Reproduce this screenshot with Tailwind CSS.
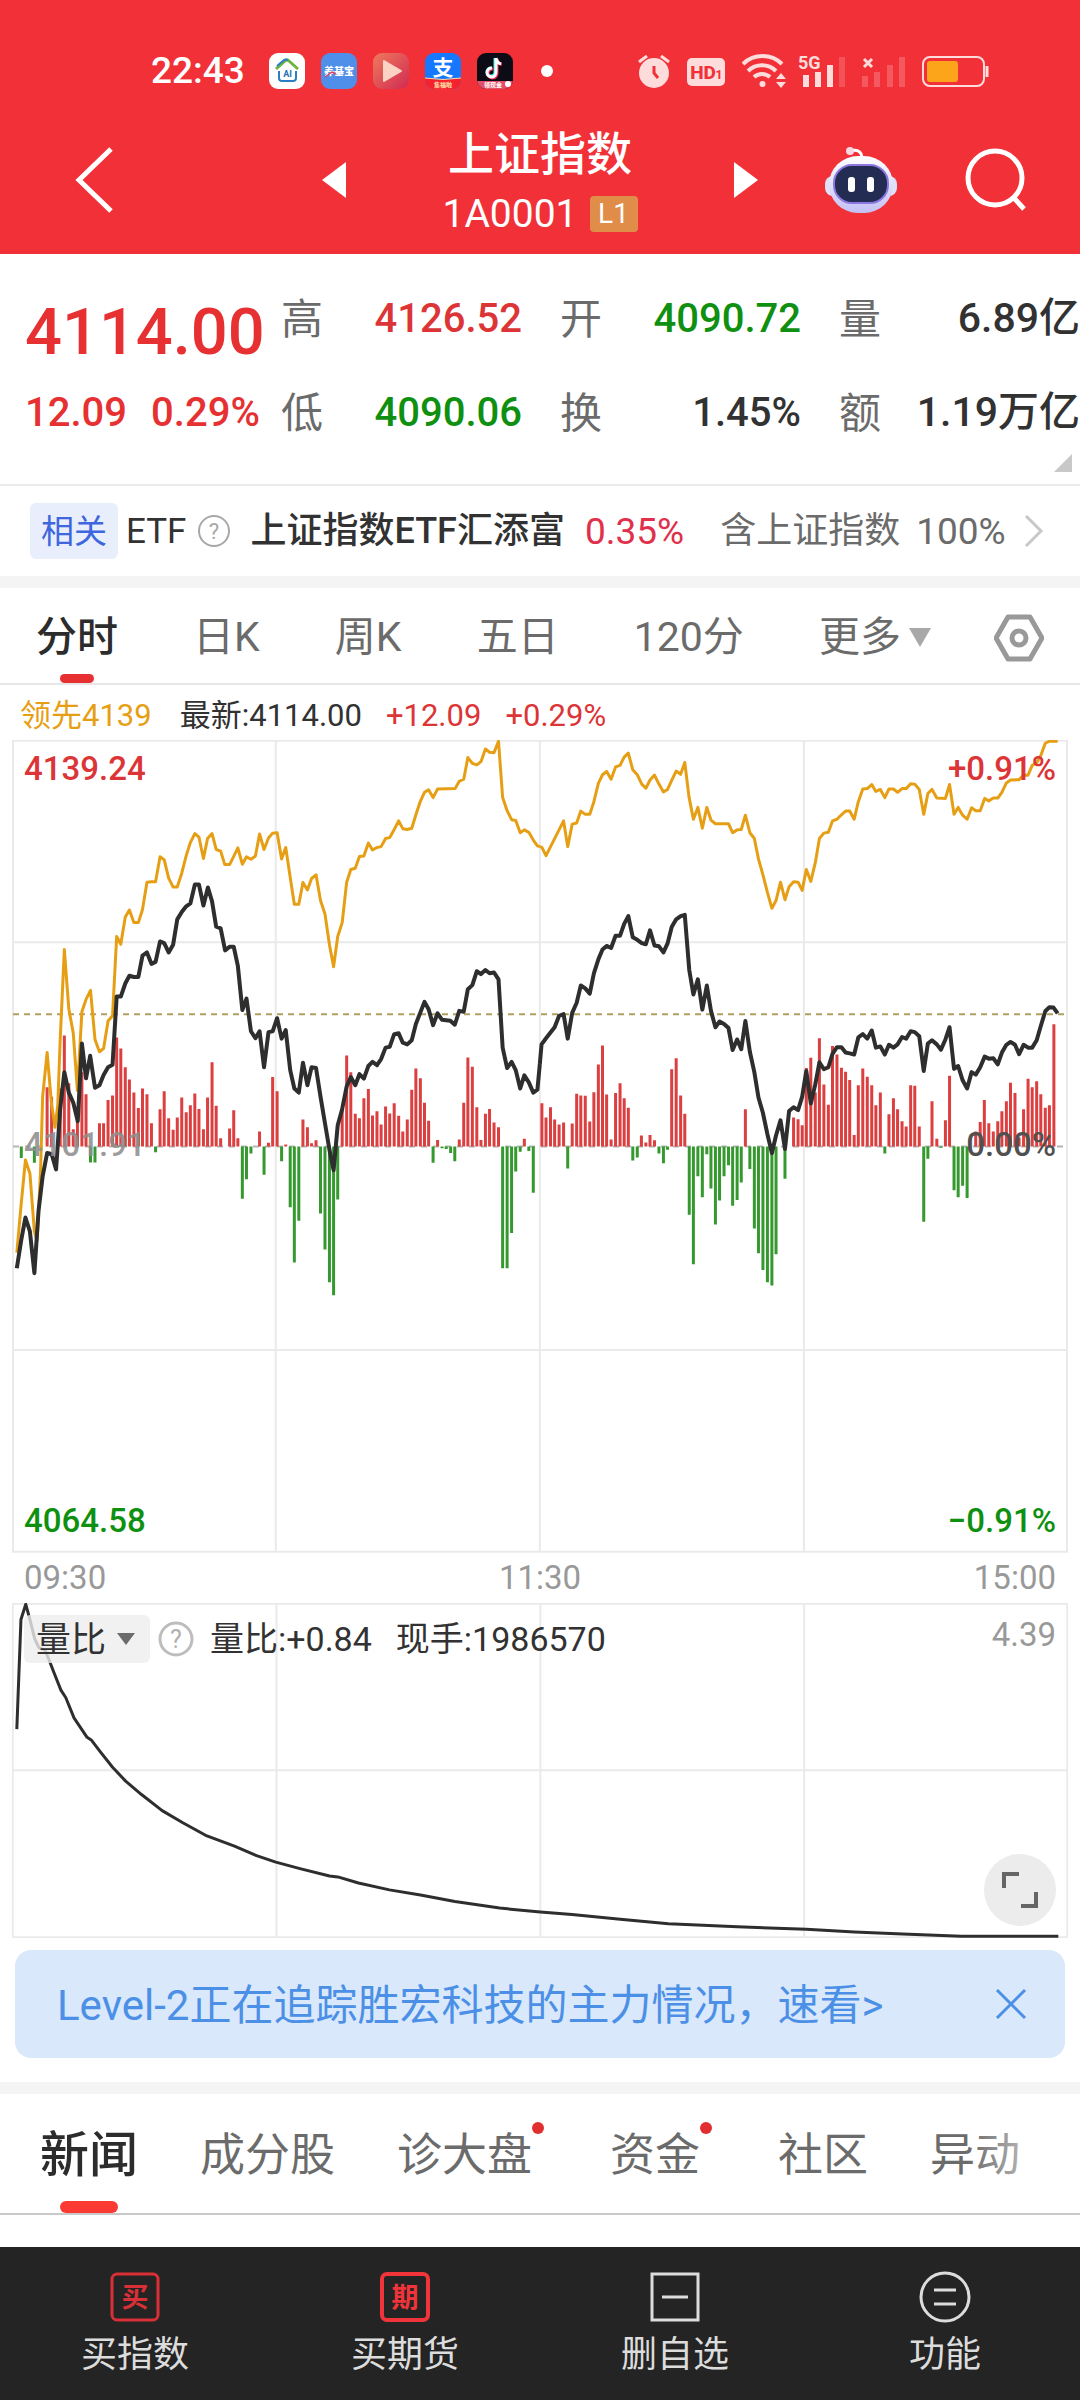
<!DOCTYPE html>
<html lang="zh-CN">
<head>
<meta charset="utf-8">
<meta name="viewport" content="width=device-width, initial-scale=1">
<title>上证指数</title>
<script src="https://cdn.jsdelivr.net/npm/@tailwindcss/browser@4"></script>
</head>
<body class="bg-white font-[Roboto,'Noto_Sans_CJK_SC',sans-serif] text-[#323232]">
<div class="flex min-h-screen w-full flex-col overflow-hidden">

<header class="bg-[#f13038] text-white">
  <!-- status bar -->
  <div class="flex h-[106px] items-center justify-between pr-[90px] pl-[151px] pt-9">
    <div class="flex items-center gap-4">
      <span class="mr-2 text-[37px] leading-9 font-medium">22:43</span>
      <svg class="size-9" viewBox="0 0 36 36"><rect width="36" height="36" rx="9" fill="#fff"/><path d="M7 16 16 8q2-2 4 0l9 8" fill="none" stroke="#6db33f" stroke-width="3"/><path d="m8 13 7-6q2-1 4 0" fill="none" stroke="#2a7fc4" stroke-width="2"/><path d="M10 18v7q0 3 3 3h11q3 0 3-3v-7" fill="none" stroke="#2a7fc4" stroke-width="2"/><text x="18.500" y="24" text-anchor="middle" font-size="9" font-weight="700" fill="#2473b8">AI</text></svg>
      <svg class="size-9" viewBox="0 0 36 36"><rect width="36" height="36" rx="9" fill="#4f8fea"/><text x="18" y="22" text-anchor="middle" font-size="10" font-weight="900" fill="#fff">养基宝</text><path d="m4 24 7-5 4 2" fill="none" stroke="#e0405c" stroke-width="1.500"/></svg>
      <svg class="size-9" viewBox="0 0 36 36"><defs><linearGradient id="pl" x1="0" y1="0" x2="1" y2="1"><stop offset="0" stop-color="#ef7a5c"/><stop offset="1" stop-color="#d02a52"/></linearGradient></defs><rect width="36" height="36" rx="9" fill="url(#pl)"/><path d="M11 8v20l17-10z" fill="#fbd3c4" stroke="#fbd3c4" stroke-width="2" stroke-linejoin="round"/></svg>
      <svg class="size-9" viewBox="0 0 36 36"><defs><clipPath id="ic"><rect width="36" height="36" rx="9"/></clipPath></defs><g clip-path="url(#ic)"><path fill="#1677ff" d="M0 0h36v36H0z"/><path fill="#f5222d" d="M0 25q18 3 36 0v11H0z"/><path d="M0 25q18 3 36 0" fill="none" stroke="#ffd9a0"/></g><text x="18" y="22" text-anchor="middle" font-size="21" font-weight="700" fill="#fff">支</text><text x="18" y="34" text-anchor="middle" font-size="6" font-weight="700" fill="#ffe9b0">集福啦</text></svg>
      <svg class="size-9" viewBox="0 0 36 36"><g clip-path="url(#ic)"><path fill="#0d0b16" d="M0 0h36v36H0z"/><path fill="#e0506a" d="M0 28h36v8H0z"/></g><path d="M18 5v14a4 4 0 1 1-4-4" fill="none" stroke="#25f4ee" stroke-width="3"/><path d="M20 6v14a4.500 4.500 0 1 1-4-4M20 6q1 5 5 5" fill="none" stroke="#fe2c55" stroke-width="3"/><path d="M19 5v14a4.500 4.500 0 1 1-4-4M19 5q1 5 5 6" fill="none" stroke="#fff" stroke-width="3"/><text x="16" y="34" text-anchor="middle" font-size="6" font-weight="700" fill="#fff">领现金</text><circle cx="31" cy="31" r="3" fill="#fff"/></svg>
      <span class="ml-3 size-3 rounded-full bg-white"></span>
    </div>
    <div class="flex items-center gap-4">
      <svg class="h-9 w-8" viewBox="0 0 32 36" fill="#ffdcdc"><circle cx="16" cy="20" r="15"/><path d="m1 9 8-6M31 9l-8-6" stroke="#ffdcdc" stroke-width="3"/><path d="M16 13v7l4 5" fill="none" stroke="#f13038" stroke-width="3"/></svg>
      <svg class="h-9 w-10" viewBox="0 0 40 36"><rect x="1" y="5" width="38" height="28" rx="5" fill="#ffdcdc"/><text x="17" y="26" text-anchor="middle" font-size="19" font-weight="800" fill="#f13038">HD</text><text x="33" y="26" text-anchor="middle" font-size="12" font-weight="800" fill="#f13038">1</text></svg>
      <svg class="h-9 w-11" viewBox="0 0 44 36" fill="none" stroke="#ffdcdc" stroke-width="4"><path d="M1 11a28 28 0 0 1 39 0M6 18a20 20 0 0 1 28 0M12 24a12 12 0 0 1 16 0"/><circle cx="20.500" cy="31" r="3" fill="#ffdcdc" stroke="none"/><path d="m39 20 5 6H34zM39 35l5-6H34z" fill="#ffdcdc" stroke="none"/></svg>
      <svg class="-ml-1 h-9 w-12 overflow-visible" viewBox="0 0 48 36" fill="#ffdcdc"><text x="0" y="16" font-size="18" font-weight="700">5G</text><path d="M5 22h6v12H5zM17 19h6v15h-6zM29 12h6v22h-6z"/><path fill-opacity=".2" d="M41 4h6v30h-6z"/></svg>
      <svg class="h-9 w-11" viewBox="0 0 44 36"><path d="m2 6 8 8M10 6l-8 8" stroke="#ffdcdc" stroke-width="3"/><path fill="#fff" fill-opacity=".2" d="M0 23h6v11H0zM12 19h6v15h-6zM25 12h6v22h-6zM37 4h6v30h-6z"/></svg>
      <svg class="h-9 w-17" viewBox="0 0 68 36"><rect x="1" y="4" width="61" height="29" rx="7" fill="none" stroke="#ffdcdc" stroke-width="2"/><rect x="5" y="8" width="31" height="21" rx="3" fill="#fca51b"/><path d="M65 13v11" stroke="#ffdcdc" stroke-width="3"/></svg>
    </div>
  </div>
  <!-- title bar -->
  <div class="grid h-[148px] grid-cols-[1fr_440px_1fr] items-center">
    <button class="w-fit pl-[75px]" aria-label="返回"><svg class="h-[68px] w-[38px]" viewBox="0 0 38 68" fill="none" stroke="#fff" stroke-width="5"><path d="M36 3 4 34l32 31"/></svg></button>
    <div class="flex items-center justify-between">
      <button aria-label="上一个"><svg class="h-9 w-[26px]" viewBox="0 0 26 36"><path fill="#fff" d="M26 0v36L2 18z"/></svg></button>
      <div class="flex flex-col items-center gap-3">
        <h1 class="text-[46px] leading-[56px] font-medium">上证指数</h1>
        <p class="flex items-center gap-3 text-[39px] leading-10">1A0001<span class="flex h-9 w-12 items-center justify-center rounded-sm bg-[#e08d4a] text-[28px]">L1</span></p>
      </div>
      <button aria-label="下一个"><svg class="h-9 w-[26px]" viewBox="0 0 26 36"><path fill="#fff" d="M0 0v36l24-18z"/></svg></button>
    </div>
    <div class="flex items-center justify-between pr-[52px] pl-16">
      <button aria-label="智能助手"><svg class="h-[70px] w-[74px]" viewBox="0 0 74 70"><defs><linearGradient id="rb" x1="0" y1="0" x2="0" y2="1"><stop offset="0" stop-color="#fff"/><stop offset="1" stop-color="#c4c0f5"/></linearGradient></defs><path d="M26 6q12-3 12 8" fill="none" stroke="#fff" stroke-width="3"/><circle cx="26" cy="6" r="4" fill="#f7d8e2"/><rect x="1" y="31" width="72" height="20" rx="8" fill="#dfe0fa"/><rect x="5" y="11" width="64" height="57" rx="29" fill="url(#rb)"/><rect x="10" y="20" width="54" height="38" rx="18" fill="#232c52" stroke="#8a78e0" stroke-width="2"/><rect x="24" y="32" width="7" height="15" rx="3" fill="#fff"/><rect x="43" y="32" width="7" height="15" rx="3" fill="#fff"/></svg></button>
      <button aria-label="搜索"><svg class="size-[66px]" viewBox="0 0 66 66" fill="none" stroke="#fff" stroke-width="5"><circle cx="33" cy="31" r="27"/><path d="m52 51 10 11"/></svg></button>
    </div>
  </div>
</header>

<!-- quote summary -->
<section class="relative grid h-[232px] grid-cols-[218px_1fr_1fr_1fr] content-start gap-x-[38px] border-b-2 border-[#ebebeb] pt-[18px] pl-[25px] text-[40px] font-medium [&_dd]:whitespace-nowrap [&_dt]:text-[42px] [&_dt]:font-normal [&_dt]:text-[#6b6b6b]">
  <div class="flex flex-col text-[#e63032]">
    <strong class="flex h-[94px] items-center pt-7 text-[65px] font-medium">4114.00</strong>
    <span class="flex h-[94px] items-center gap-6 text-[40px] whitespace-nowrap"><span>12.09</span><span>0.29%</span></span>
  </div>
  <dl class="[&>div]:flex [&>div]:h-[94px] [&>div]:items-center [&>div]:justify-between">
    <div><dt>高</dt><dd class="text-[#dc3537]">4126.52</dd></div>
    <div><dt>低</dt><dd class="text-[#0f9010]">4090.06</dd></div>
  </dl>
  <dl class="[&>div]:flex [&>div]:h-[94px] [&>div]:items-center [&>div]:justify-between">
    <div><dt>开</dt><dd class="text-[#0f9010]">4090.72</dd></div>
    <div><dt>换</dt><dd>1.45%</dd></div>
  </dl>
  <dl class="[&>div]:flex [&>div]:h-[94px] [&>div]:items-center [&>div]:justify-between">
    <div><dt>量</dt><dd class="text-[41px]">6.89亿</dd></div>
    <div><dt>额</dt><dd class="text-[41px]">1.19万亿</dd></div>
  </dl>
  <svg class="absolute right-2 bottom-3 size-[18px]" viewBox="0 0 18 18"><path fill="#c8c8c8" d="M18 0v18H0z"/></svg>
</section>

<!-- related ETF -->
<a href="#etf" class="flex h-[90px] items-center pr-9 pl-[30px] text-[35px] leading-none whitespace-nowrap">
  <span class="flex h-14 w-[88px] items-center justify-center rounded-md bg-[#e8eefc] text-[33px] text-[#3f66dc]">相关</span>
  <span class="ml-2">ETF</span>
  <svg class="ml-3 size-8" viewBox="0 0 32 32"><circle cx="16" cy="16" r="15" fill="none" stroke="#a8a8a8" stroke-width="2"/><text x="16" y="24" text-anchor="middle" font-size="22" fill="#a8a8a8">?</text></svg>
  <span class="ml-5 text-[36px] font-medium">上证指数ETF汇添富</span>
  <span class="ml-5 text-[37px] text-[#e0304c]">0.35%</span>
  <span class="ml-9 text-[36px] text-[#6b6b6b]">含上证指数</span>
  <span class="ml-4 text-[37px] text-[#6b6b6b]">100%</span>
  <svg class="ml-auto h-8 w-5" viewBox="0 0 20 32" fill="none" stroke="#c8c8c8" stroke-width="3"><path d="m2 1 15 15L2 31"/></svg>
</a>

<div class="h-3 bg-[#f4f4f4]"></div>

<!-- period tabs -->
<nav class="flex h-[97px] items-center justify-between border-b-2 border-[#e6e6e6] px-9 pt-1 text-[41px] text-[#6b6b6b]">
  <button class="relative flex h-full items-center font-medium text-[#2c2c2c]">分时<span class="absolute inset-x-6 bottom-0 h-[9px] rounded-full bg-[#e63032]"></span></button>
  <button>日K</button>
  <button>周K</button>
  <button>五日</button>
  <button>120分</button>
  <button class="flex items-center gap-2">更多<svg class="h-[19px] w-[22px]" viewBox="0 0 22 19"><path fill="#a8a8a8" d="M0 0h22L11 19z"/></svg></button>
  <button class="-ml-3" aria-label="设置"><svg class="h-12 w-[50px]" viewBox="0 0 50 48" fill="none" stroke="#999" stroke-width="5" stroke-linejoin="round"><path d="M14 3h22l12 21-12 21H14L2 24z"/><circle cx="25" cy="24" r="7"/></svg></button>
</nav>

<!-- intraday chart -->
<div class="flex h-[55px] items-center gap-6 px-5 pt-2 text-[31px]">
  <span class="mr-1 text-[#e69f14]">领先4139</span><span>最新:4114.00</span><span class="text-[#dc3537]">+12.09</span><span class="text-[#dc3537]">+0.29%</span>
</div>
<figure class="relative mx-3 h-[813px] text-[33px] leading-none">
  <svg class="size-full [&_path]:[vector-effect:non-scaling-stroke] [&_polyline]:[vector-effect:non-scaling-stroke]" viewBox="35 147 3067 1990" preserveAspectRatio="none" fill="none">
    <path stroke="#eaeaea" stroke-width="2" d="M38 149H3099V2134H38ZM38 642H3099M38 1640H3099M801 149V2134M1568 149V2134M2335 149V2134"/>
    <path stroke="#b5b5b5" stroke-width="2" stroke-dasharray="6 6" d="M38 1142H3099"/>
    <g stroke-width="3">
      <path stroke="#dc3f3f" data-bars="137:997 150:1020 175:1000 187:870 200:987 213:1100 225:1075 238:960 250:1014 289:1085 301:1085 314:1028 327:1017 339:875 351:902 364:948 376:978 389:1010 402:1048 414:1000 427:1014 440:1085 465:1051 477:1007 490:1073 503:1101 515:1071 528:1022 541:1058 553:1041 566:1012 578:1050 591:1100 603:1022 616:936 628:1042 641:1122 667:1098 679:1053 691:1122 754:1105 780:1133 792:972 805:1007 830:1137 880:1076 893:1095 905:1134 918:1127 994:1050 1007:919 1019:960 1032:1062 1044:1073 1057:1024 1070:1001 1082:1066 1095:1056 1107:1088 1120:1044 1132:1061 1145:1036 1158:1067 1170:1105 1183:1076 1196:1003 1208:951 1221:975 1233:1035 1245:1079 1271:1126 1334:1125 1347:1035 1359:924 1372:947 1385:1046 1397:1126 1410:1062 1422:1050 1435:1083 1448:1095 1523:1123"/>
      <path stroke="#35992f" data-bars="62:1170 100:1182 263:1181 276:1181 452:1156 704:1270 716:1222 729:1159 767:1211 818:1178 843:1291 855:1426 868:1324 931:1306 944:1394 957:1474 969:1506 981:1272 1258:1182 1284:1146 1296:1148 1309:1158 1321:1178 1460:1440 1473:1440 1486:1354 1498:1203 1511:1155 1536:1153 1549:1255"/>
      <g transform="translate(1568 0)">
        <path stroke="#dc3f3f" data-bars="6:1036 18:1071 31:1046 43:1076 56:1088 69:1083 94:1086 107:1013 119:1017 132:1018 145:1081 157:1009 170:941 182:895 194:1015 207:1125 220:1011 233:987 245:1024 257:1047 295:1115 308:1132 320:1114 333:1127 383:953 396:926 409:1017 421:1062 597:1051 737:1071 750:1075 762:1090 774:950 787:925 800:1010 812:877 825:990 838:1040 850:896 863:917 876:949 888:959 900:979 913:1114 925:992 938:951 951:971 964:992 976:1041 989:1010 1014:1063 1027:1024 1039:1051 1052:1080 1064:1093 1077:992 1089:993 1102:1093 1139:1031 1153:1123 1178:1078 1190:969 1266:1105 1279:1082 1291:1028 1304:1085 1317:1105 1330:1080 1342:1056 1355:1031 1367:986 1380:1011 1392:1120 1405:1051 1418:976 1430:997 1443:982 1455:1014 1468:1047 1480:1041 1493:843"/>
        <path stroke="#35992f" data-bars="81:1196 270:1176 283:1169 346:1159 359:1183 371:1150 434:1309 446:1430 459:1215 472:1266 485:1161 497:1245 510:1333 522:1274 535:1215 548:1188 560:1287 573:1273 585:1230 610:1197 623:1343 635:1403 648:1444 661:1474 674:1482 686:1406 712:1221 1002:1159 1115:1326 1127:1172 1165:1145 1203:1249 1215:1266 1228:1238 1241:1268"/>
      </g>
    </g>
    <path stroke="#b0a060" stroke-width="2" stroke-dasharray="6 5" d="M38 818H3099"/>
    <g stroke-linejoin="round" stroke-width="3">
      <g stroke="#e69f14">
        <polyline points="49,1402 62,1280 74,1175 87,1208 100,1350 108,1372 118,1200 124,1020 137,912 150,1040 160,1095 168,1040 175,880 187,660 200,805 213,865 225,1005 238,812 250,782 263,760 276,880 289,910 301,902 314,835 327,822 339,628 351,647 364,580 376,563 389,594 402,594 414,562 427,495 440,494 452,494 465,433 477,440 490,485 503,507 515,507 528,473 541,430 553,398 566,376 578,385 591,437 603,388 616,376 628,415 641,419 653,452 667,452 679,432 691,411 704,451 716,433 729,439 742,431 754,377 767,415 780,387 792,375 805,374 818,438 830,410 843,483 855,549 868,549 880,496 893,514 905,486 918,477 931,540 944,573 957,648 969,702 981,628 994,594 1007,495 1019,464 1032,461 1044,432 1057,431 1070,399 1082,416 1095,410 1107,408 1120,388 1132,386 1145,366 1158,345 1170,364 1183,366 1196,363 1208,330 1221,297 1233,275 1245,269 1258,288 1271,267 1322,266 1334,248 1347,243 1359,190 1372,204 1385,208 1397,200 1410,169 1422,177 1435,178 1448,150 1460,288 1473,320 1486,342 1498,344 1511,374 1523,367 1536,373 1549,392 1561,406 1568,408"/>
        <polyline transform="translate(1568 0)" points="0,408 6,410 18,430 69,345 81,408 94,353 107,350 119,321 132,329 145,329 157,298 170,253 182,232 194,224 207,243 220,213 233,209 245,189 257,179 270,220 283,232 296,255 308,265 320,245 333,233 346,255 359,274 371,268 383,246 396,223 409,231 421,202 433,285 446,341 459,312 472,363 485,312 497,343 510,352 548,352 560,374 573,367 585,366 597,331 610,374 623,388 635,438 648,477 661,520 674,559 686,540 699,495 712,538 724,506 737,494 750,495 762,515 774,464 787,493 800,448 812,388 825,375 838,373 850,345 863,341 876,330 888,321 900,321 913,341 925,298 938,267 951,266 964,256 976,273 989,268 1002,288 1014,267 1027,267 1039,275 1052,266 1064,266 1077,254 1089,255 1102,268 1115,329 1127,278 1139,268 1153,289 1178,290 1190,256 1203,329 1215,312 1228,331 1241,341 1254,313 1266,320 1279,320 1292,290 1304,296 1317,289 1330,289 1342,275 1355,252 1367,245 1392,244 1405,233 1418,233 1430,209 1443,203 1455,185 1468,155 1480,150 1504,150"/>
      </g>
      <g stroke="#2e2e2e" stroke-width="4">
        <polyline points="49,1440 62,1370 74,1316 87,1350 100,1452 112,1300 124,1215 137,1158 150,1160 163,1198 175,1050 187,960 200,1010 213,1035 226,1080 238,890 250,975 262,920 276,998 289,992 301,967 314,948 327,942 339,775 351,775 364,743 376,724 389,727 402,727 414,675 427,667 440,695 452,690 465,640 477,644 490,667 503,648 515,586 528,568 541,554 553,547 566,501 578,501 591,552 604,508 616,542 628,604 641,608 654,662 667,653 679,653 691,700 704,808 716,780 729,860 742,877 754,860 767,948 780,862 792,860 805,828 818,878 830,857 843,955 855,1000 868,1010 880,937 893,992 905,948 918,950 931,1020 944,1085 957,1150 969,1200 981,1090 994,1050 1007,995 1019,972 1032,992 1044,965 1057,976 1070,945 1082,935 1095,943 1107,928 1120,900 1132,898 1145,867 1158,865 1170,888 1183,892 1196,882 1208,842 1233,788 1245,806 1258,845 1271,816 1284,832 1308,834 1321,844 1334,810 1347,812 1359,757 1372,747 1385,713 1397,720 1410,710 1422,718 1435,716 1448,733 1460,900 1473,950 1486,935 1498,955 1511,1000 1523,968 1536,985 1549,1010 1561,1003 1568,940"/>
        <polyline transform="translate(1568 0)" points="0,940 5,892 18,877 31,863 43,850 56,822 69,818 81,878 94,815 107,790 119,748 132,755 145,768 157,718 170,684 182,660 194,651 207,656 220,626 233,626 245,597 257,578 270,630 283,636 296,644 308,647 320,613 333,650 346,652 359,667 371,645 383,605 396,586 409,578 421,575 434,710 446,770 459,733 472,807 485,748 497,810 510,850 522,836 535,842 548,852 560,906 573,880 585,904 597,835 610,910 623,960 635,1022 648,1060 661,1112 674,1158 686,1115 699,1078 712,1148 724,1055 737,1046 750,1053 762,1020 774,957 787,1037 800,990 812,936 825,953 838,948 850,915 863,899 876,899 888,912 900,914 913,917 925,875 938,867 951,878 964,858 976,900 989,897 1002,917 1014,893 1027,900 1039,892 1052,874 1064,878 1077,860 1089,862 1102,872 1115,957 1127,890 1139,882 1153,892 1165,905 1178,880 1190,850 1203,952 1215,945 1228,980 1241,1000 1254,960 1266,966 1279,948 1292,922 1304,927 1317,926 1330,941 1342,912 1355,893 1367,886 1380,893 1392,916 1405,893 1418,900 1430,900 1443,882 1455,847 1468,811 1480,801 1492,802 1504,816"/>
      </g>
    </g>
  </svg>
  <div class="absolute inset-0 flex flex-col justify-between px-3 pt-3 pb-4 font-medium">
    <div class="flex justify-between text-[#dc3537]"><span>4139.24</span><span>+0.91%</span></div>
    <div class="flex justify-between text-[#8e8e8e]/90"><span>4101.91</span><span class="text-[#505050]">0.00%</span></div>
    <div class="flex justify-between text-[#0f9010]"><span>4064.58</span><span>−0.91%</span></div>
  </div>
</figure>
<div class="grid h-[50px] grid-cols-3 items-center px-6 text-[33px] text-[#999]"><span>09:30</span><span class="text-center">11:30</span><span class="text-right">15:00</span></div>

<!-- volume ratio chart -->
<figure class="relative mx-3 h-[335px]">
  <svg class="size-full [&_path]:[vector-effect:non-scaling-stroke]" viewBox="17 697 1533 773" preserveAspectRatio="none" fill="none">
    <path stroke="#eaeaea" stroke-width="2" d="M18 699H1549V1468H18ZM18 1083H1549M401 699V1468M784 699V1468M1167 699V1468"/>
    <path stroke="#2e2e2e" stroke-width="3" stroke-linejoin="round" d="M24 988 30 735 37 700 43 735 50 780 56 800 65 806 70 825 78 858 88 898 95 915 107 962 126 1007 132 1013 145 1040 163 1076 182 1108 205 1139 235 1176 265 1204 298 1233 340 1258 372 1280 400 1295 435 1310 478 1327 490 1329 520 1343 565 1359 610 1371 660 1386 725 1401 784 1410 830 1416 900 1427 970 1437 1070 1444 1170 1450 1240 1456 1310 1461 1395 1466 1536 1466"/>
  </svg>
  <div class="absolute inset-x-3 top-3 flex h-12 items-center text-[34px]">
    <div class="relative">
      <select aria-label="指标" class="block h-12 w-[126px] appearance-none rounded-md bg-[#eee]/80 pl-3 text-[35px]"><option>量比</option></select>
      <svg class="pointer-events-none absolute top-[18px] right-[15px] h-3 w-[18px]" viewBox="0 0 18 12"><path fill="#6b6b6b" d="M0 0h18L9 12z"/></svg>
    </div>
    <svg class="ml-2 size-9" viewBox="0 0 36 36"><circle cx="18" cy="18" r="16" fill="none" stroke="#bdbdbd" stroke-width="3"/><text x="18" y="27" text-anchor="middle" font-size="25" fill="#b0b0b0">?</text></svg>
    <span class="ml-4">量比:+0.84</span><span class="ml-6">现手:1986570</span>
    <span class="ml-auto pb-2 text-[33px] text-[#999]">4.39</span>
  </div>
  <button aria-label="全屏" class="absolute right-3 bottom-3 flex size-[72px] items-center justify-center rounded-full bg-[#ececec]"><svg class="size-10" viewBox="0 0 40 40" fill="none" stroke="#666" stroke-width="4"><path d="M4 18V4h15M36 22v14H21"/></svg></button>
</figure>

<!-- promo banner -->
<div class="mx-[15px] mt-3 flex h-[108px] items-center justify-between rounded-2xl bg-[#dae8fb] pr-[38px] pl-[42px] text-[#4b90e6]">
  <a href="#level2" class="pt-1 text-[42px] leading-none whitespace-nowrap">Level-2正在追踪胜宏科技的主力情况，速看&gt;</a>
  <button aria-label="关闭"><svg class="size-8" viewBox="0 0 32 32" stroke="currentColor" stroke-width="3"><path d="m2 2 28 28M30 2 2 30"/></svg></button>
</div>

<div class="mt-6 h-3 bg-[#f4f4f4]"></div>

<!-- content tabs -->
<nav class="relative flex h-[121px] items-center gap-[62px] overflow-hidden border-b-2 border-[#c9c9c9] pt-1 pl-10 text-[45px] whitespace-nowrap text-[#6b6b6b]">
  <button class="relative flex h-full items-center text-[49px] font-medium text-[#2c2c2c]">新闻<span class="absolute inset-x-5 bottom-0 h-3 rounded-full bg-[#fb3a34]"></span></button>
  <button>成分股</button>
  <button class="relative mr-4">诊大盘<span class="absolute top-0 -right-3 size-3 rounded-full bg-[#e12f30]"></span></button>
  <button class="relative mr-4">资金<span class="absolute top-0 -right-3 size-3 rounded-full bg-[#e12f30]"></span></button>
  <button>社区</button>
  <button>异动</button>
  <span class="pointer-events-none absolute inset-y-0 right-0 w-28 bg-linear-to-r from-white/0 to-white"></span>
</nav>
<div class="h-8 grow"></div>

<!-- bottom actions -->
<footer class="grid h-[153px] grid-cols-4 bg-[#242424] text-[36px] leading-none text-[#dcdcdc] [&>button]:flex [&>button]:flex-col [&>button]:items-center [&>button]:gap-[14px] [&>button]:pt-6">
  <button><svg class="size-[52px]" viewBox="0 0 52 52"><rect x="3" y="3" width="46" height="46" rx="5" fill="none" stroke="#d92f36" stroke-width="3"/><text x="26" y="36" text-anchor="middle" font-size="27" font-weight="700" fill="#d92f36">买</text></svg>买指数</button>
  <button><svg class="size-[52px]" viewBox="0 0 52 52"><rect x="3" y="3" width="46" height="46" rx="5" fill="none" stroke="#f0343a" stroke-width="4"/><text x="26" y="36" text-anchor="middle" font-size="27" font-weight="700" fill="#f0343a">期</text></svg>买期货</button>
  <button><svg class="size-[52px]" viewBox="0 0 52 52" fill="none" stroke="#dcdcdc" stroke-width="3"><path d="M3 3h46v46H3zM13 26h26"/></svg>删自选</button>
  <button><svg class="size-[52px]" viewBox="0 0 52 52" fill="none" stroke="#dcdcdc" stroke-width="3"><circle cx="26" cy="26" r="24"/><path d="M15 19h22M15 33h22"/></svg>功能</button>
</footer>
</div>
<script>
  // Turns "x:y" pairs into vertical bars that start on the zero line.
  const ZERO = 1142;
  document.querySelectorAll('[data-bars]').forEach(function (path) {
    path.setAttribute('d', path.dataset.bars.split(' ').map(function (bar) {
      const [x, y] = bar.split(':');
      return 'M' + x + ' ' + ZERO + 'V' + y;
    }).join(''));
  });
</script>
</body>
</html>
